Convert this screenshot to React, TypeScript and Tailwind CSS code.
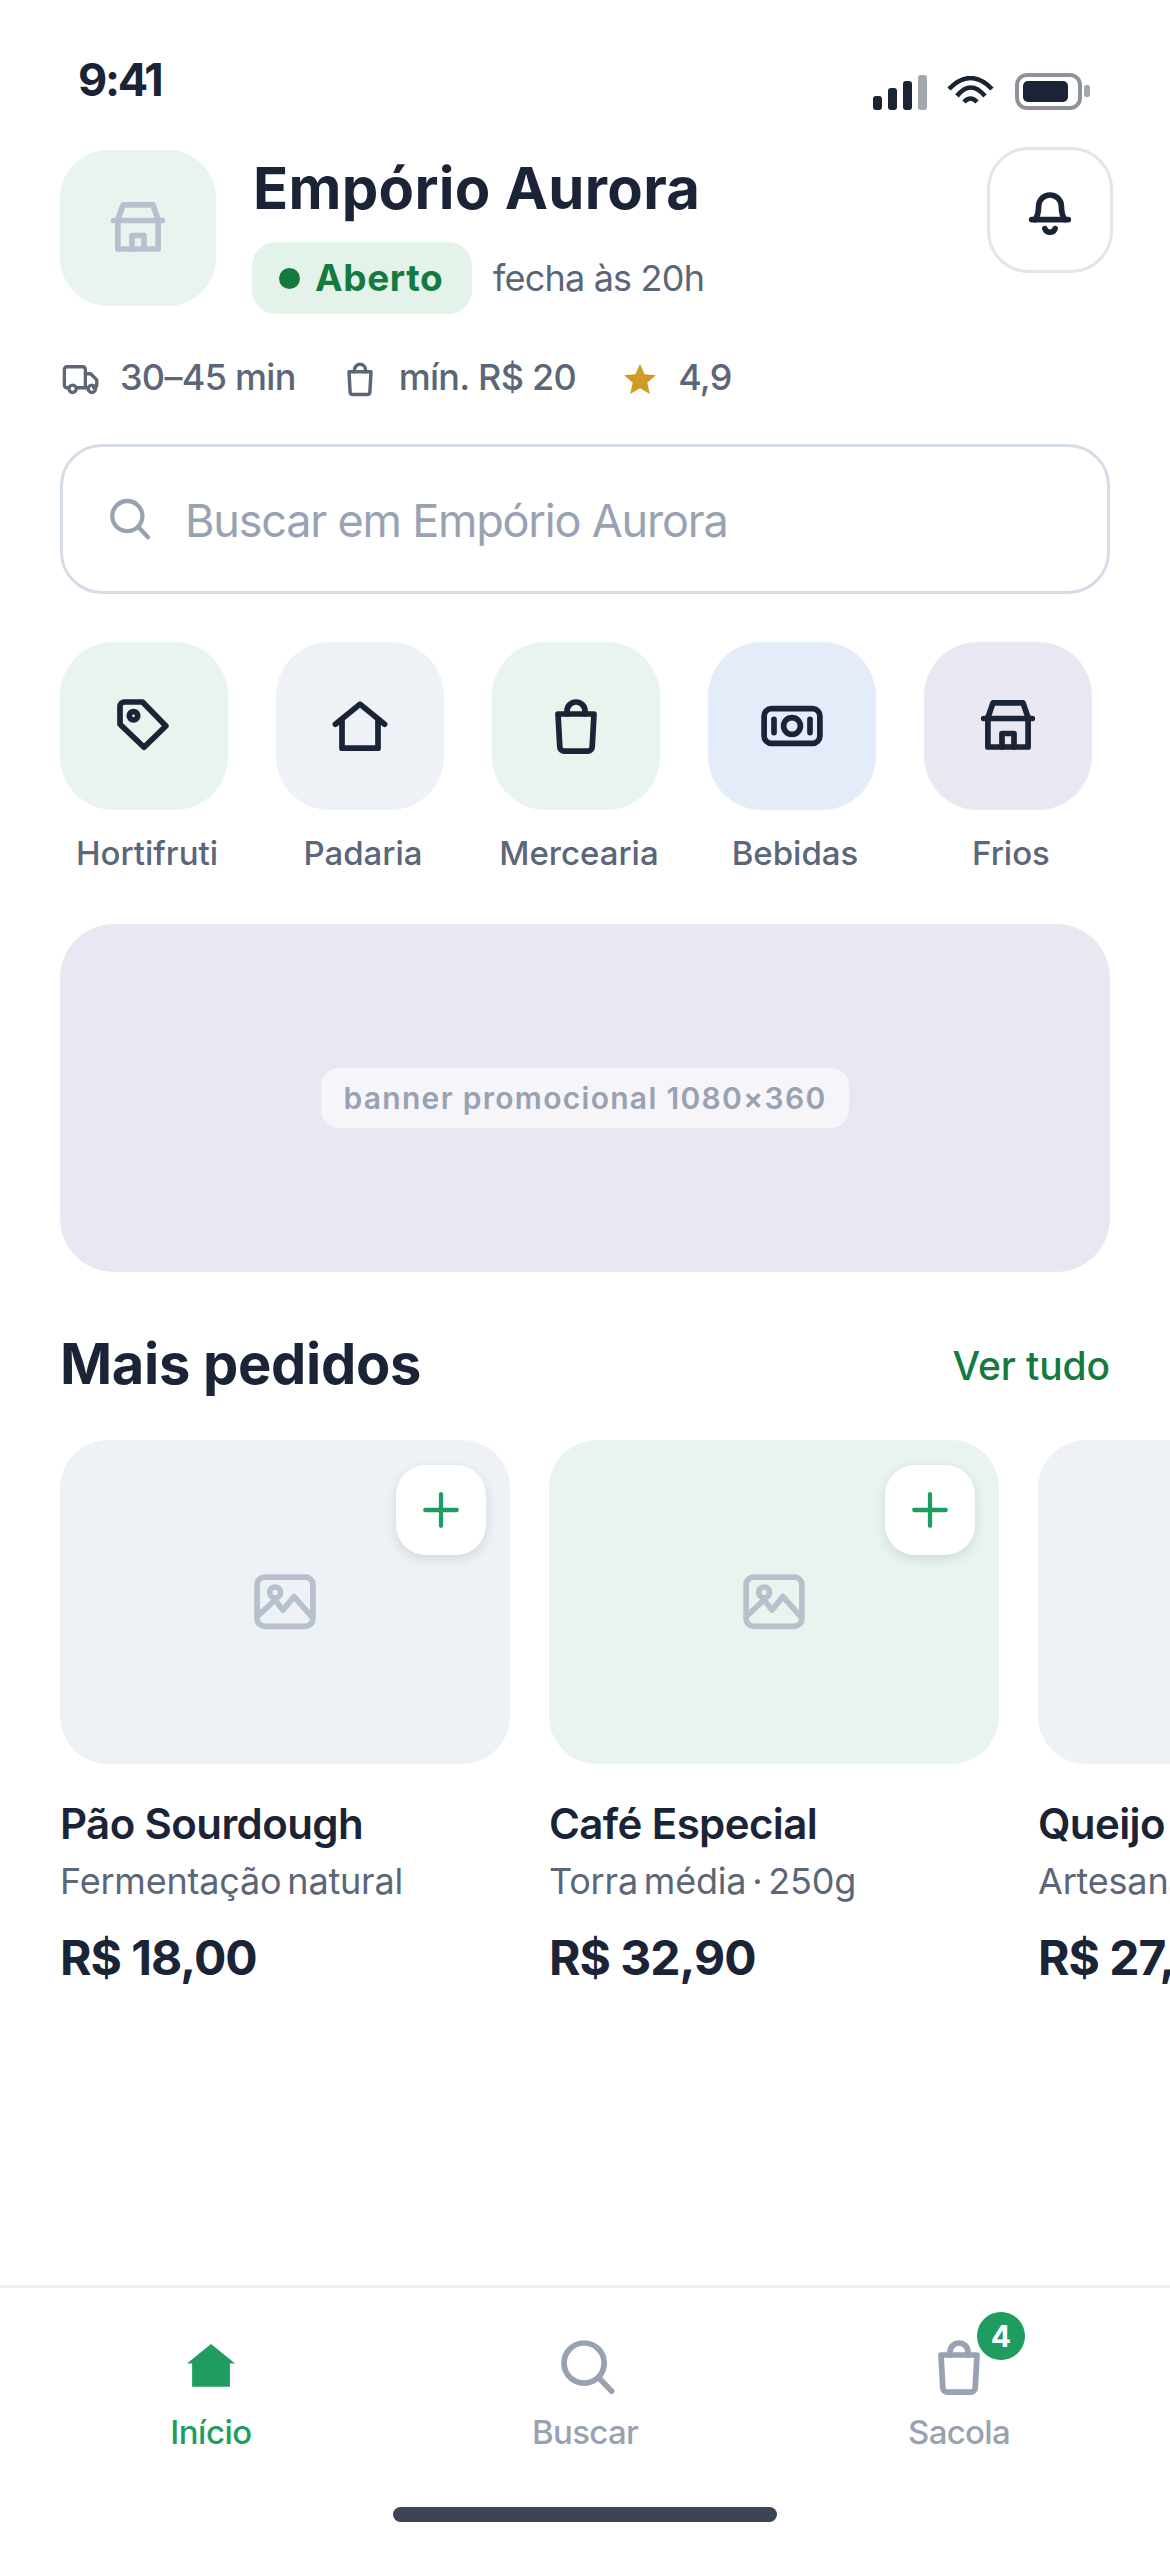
import type { ReactNode } from 'react';

const CATEGORIES = [
  { label: 'Hortifruti', bg: 'bg-[#e9f4ee]', icon: 'tag' },
  { label: 'Padaria', bg: 'bg-[#eef1f6]', icon: 'home' },
  { label: 'Mercearia', bg: 'bg-[#e9f4ee]', icon: 'bag' },
  { label: 'Bebidas', bg: 'bg-[#e4ebf9]', icon: 'money' },
  { label: 'Frios', bg: 'bg-[#e9e7f2]', icon: 'store' },
];

const PRODUCTS = [
  { name: 'Pão Sourdough', desc: 'Fermentação natural', price: 'R$ 18,00', bg: 'bg-[#eef1f6]' },
  { name: 'Café Especial', desc: 'Torra média · 250g', price: 'R$ 32,90', bg: 'bg-[#e9f4ee]' },
  { name: 'Queijo Minas', desc: 'Artesanal', price: 'R$ 27,50', bg: 'bg-[#eef1f6]' },
];

function Icon({ children, className }: { children: ReactNode; className: string }) {
  return (
    <svg
      viewBox="0 0 24 24"
      fill="none"
      stroke="currentColor"
      strokeWidth={1.9}
      strokeLinecap="round"
      strokeLinejoin="round"
      className={className}
    >
      {children}
    </svg>
  );
}

const PATHS: Record<string, ReactNode> = {
  tag: (
    <>
      <path d="M5.5 4h6L19.3 12 12 19.1 4 11.4V5.5A1.5 1.5 0 0 1 5.5 4z" />
      <circle cx="8.5" cy="8.6" r="1.4" />
    </>
  ),
  home: (
    <>
      <path d="M3.8 11.4 12 4.7l8.2 6.7" />
      <path d="M6 9.8v9.6h12V9.8" />
    </>
  ),
  bag: (
    <>
      <path d="M6 8h12l-.6 11a1.5 1.5 0 0 1-1.5 1.4H8.1A1.5 1.5 0 0 1 6.6 19z" />
      <path d="M9 8V7a3 3 0 0 1 6 0v1" />
    </>
  ),
  money: (
    <>
      <rect x="2.7" y="6.2" width="18.6" height="11.6" rx="2.5" />
      <circle cx="12" cy="12" r="2.8" />
      <path d="M6 9.8v4.4M18 9.8v4.4" />
    </>
  ),
  store: (
    <>
      <path d="M3.9 9.5h16.2" />
      <path d="M5.2 9.5 7 4.3h10l1.8 5.2" />
      <path d="M5.3 9.5V19h13.4V9.5" />
      <path d="M10 19v-4.5h4V19" />
    </>
  ),
  truck: (
    <>
      <path d="M5 17H4a1.5 1.5 0 0 1-1.5-1.5v-9A1.5 1.5 0 0 1 4 5h9a1.5 1.5 0 0 1 1.5 1.5V17H9.5" />
      <path d="M14.5 9h3l3.5 3.5V15.5a1.5 1.5 0 0 1-1.5 1.5h-.3" />
      <path d="M14.5 17h1.7" />
      <circle cx="7.2" cy="17.6" r="2.1" />
      <circle cx="18.2" cy="17.6" r="2.1" />
    </>
  ),
  search: (
    <>
      <circle cx="11.7" cy="10.7" r="6.7" />
      <path d="m16.6 15.6 4.3 4.5" />
    </>
  ),
  bell: (
    <>
      <path d="M5.9 15.2h12.2" />
      <path d="M7 15.2c.9-1.2 1.2-2.6 1.2-4.4a3.8 3.8 0 0 1 7.6 0c0 1.8.3 3.2 1.2 4.4" />
      <path d="M10.3 18.2a1.8 1.8 0 0 0 3.4 0" />
    </>
  ),
  image: (
    <>
      <rect x="2.7" y="3.7" width="18.6" height="16.4" rx="2.5" />
      <circle cx="8.7" cy="8.8" r="1.8" />
      <path d="m3.4 16.2 5.3-4.9 2.6 3.4 3.7-4.5 5.9 6.7" />
    </>
  ),
  plus: <path d="M12 5v14M5 12h14" />,
};

function StatusBar() {
  return (
    <div className="h-[147px] flex justify-between items-start pl-[78px] pr-[80px] pt-[57px]">
      <span className="text-[45px] leading-[46px] font-bold tracking-[-2.2px] text-[#1b2436]">9:41</span>
      <div className="flex items-start gap-[20px] pt-[16px]">
        <svg width="54" height="35" viewBox="0 0 54 35" className="mt-[2px]">
          <rect x="0" y="21" width="9" height="14" rx="3" fill="#1b2436" />
          <rect x="15" y="13" width="9" height="22" rx="3" fill="#1b2436" />
          <rect x="30" y="6" width="9" height="29" rx="3" fill="#1b2436" />
          <rect x="45" y="0" width="9" height="35" rx="3" fill="#a3a7af" />
        </svg>
        <svg width="48" height="28" viewBox="0 0 48 28" fill="none" stroke="#1b2436" strokeWidth="4.5" className="mt-[3px]">
          <path d="M2 13Q23.5-9 45 13" />
          <path d="M10 20Q23.5 3 38 20" />
          <path d="M17 26Q23.5 19 30 26" />
        </svg>
        <svg width="75" height="37" viewBox="0 0 75 37">
          <rect x="2" y="2" width="63" height="33" rx="10" fill="none" stroke="#8e929b" strokeWidth="4" />
          <rect x="8" y="8" width="45" height="21" rx="5" fill="#1b2436" />
          <rect x="69" y="12" width="6" height="12" rx="2.5" fill="#a3a7af" />
        </svg>
      </div>
    </div>
  );
}

function Header() {
  return (
    <div className="flex justify-between items-start pl-[60px] pr-[57px]">
      <div className="flex gap-[36px] mt-[3px]">
        <div className="w-[156px] h-[156px] rounded-[48px] bg-[#e9f4ee] flex items-center justify-center text-[#b6c1cd]">
          <Icon className="w-[72px] h-[72px]">{PATHS.store}</Icon>
        </div>
        <div className="pt-[5px]">
          <h1 className="ml-[1px] text-[58px] leading-[66px] font-bold tracking-[0.3px] text-[#1b2436]">Empório Aurora</h1>
          <div className="flex items-center gap-[21px] mt-[21px]">
            <div className="h-[72px] w-[220px] rounded-[24px] bg-[#e3f3e9] flex items-center gap-[15px] pl-[27px]">
              <span className="w-[21px] h-[21px] rounded-full bg-[#157a3f]" />
              <span className="text-[37px] font-bold text-[#157a3f] tracking-[0.6px]">Aberto</span>
            </div>
            <span className="text-[36px] text-[#5b6678] tracking-[-0.8px]">fecha às 20h</span>
          </div>
        </div>
      </div>
      <button className="w-[126px] h-[126px] rounded-[42px] border-[3px] border-[#e2e5ec] bg-white flex items-center justify-center text-[#1b2436]">
        <Icon className="w-[72px] h-[72px]">{PATHS.bell}</Icon>
      </button>
    </div>
  );
}

function MetaRow() {
  return (
    <div className="flex items-center gap-[43px] pl-[60px] mt-[44px] h-[42px] text-[36px] leading-[38px] font-medium text-[#5b6678] tracking-[-0.7px]">
      <div className="flex items-center gap-[18px]">
        <Icon className="w-[42px] h-[42px]">{PATHS.truck}</Icon>
        <span className="-mt-[4px]">30–45 min</span>
      </div>
      <div className="flex items-center gap-[18px]">
        <Icon className="w-[44px] h-[44px] -mx-[1px]">{PATHS.bag}</Icon>
        <span className="-mt-[4px]">mín. R$ 20</span>
      </div>
      <div className="flex items-center gap-[19px] ml-[2px]">
        <svg viewBox="0 0 24 24" className="w-[38px] h-[38px]" fill="#cf9a25">
          <polygon points="12,2.5 14.9,9 22,9.7 16.6,14.4 18.2,21.5 12,17.8 5.8,21.5 7.4,14.4 2,9.7 9.1,9" />
        </svg>
        <span className="-mt-[4px]">4,9</span>
      </div>
    </div>
  );
}

function SearchBar() {
  return (
    <div className="mx-[60px] mt-[44px] h-[150px] rounded-[42px] border-[3px] border-[#d5dce8] flex items-center pl-[38px] gap-[30px] text-[#98a2b3]">
      <Icon className="w-[54px] h-[54px]">{PATHS.search}</Icon>
      <span className="pt-[3px] text-[45px] tracking-[-1.2px]">Buscar em Empório Aurora</span>
    </div>
  );
}

function Categories() {
  return (
    <div className="flex gap-[42px] pl-[60px] mt-[48px]">
      {CATEGORIES.map((c) => (
        <div key={c.label} className="w-[174px]">
          <div className={`w-[168px] h-[168px] rounded-[54px] flex items-center justify-center text-[#1b2436] ${c.bg}`}>
            <Icon className="w-[72px] h-[72px]">{PATHS[c.icon]}</Icon>
          </div>
          <div className="mt-[22px] text-center text-[33px] leading-[42px] font-medium text-[#5b6678] tracking-[0px] whitespace-nowrap">
            {c.label}
          </div>
        </div>
      ))}
    </div>
  );
}

function Banner() {
  return (
    <div className="mx-[60px] mt-[50px] h-[348px] rounded-[54px] bg-[#e9e7f2] flex items-center justify-center">
      <div className="h-[60px] w-[528px] rounded-[18px] bg-white/60 flex items-center justify-center text-[30px] font-semibold text-[#98a2b3] tracking-[1.3px] whitespace-nowrap">
        banner promocional 1080×360
      </div>
    </div>
  );
}

function ProductCard({ name, desc, price, bg }: (typeof PRODUCTS)[number]) {
  return (
    <div className="w-[450px] shrink-0">
      <div className={`relative h-[324px] rounded-[48px] flex items-center justify-center text-[#b6c1cd] ${bg}`}>
        <Icon className="w-[72px] h-[72px]">{PATHS.image}</Icon>
        <div className="absolute top-[25px] right-[24px] w-[90px] h-[90px] rounded-[30px] bg-white shadow-[0_4px_12px_rgba(27,36,54,0.12)] flex items-center justify-center text-[#1f9d61]">
          <Icon className="w-[54px] h-[54px]">{PATHS.plus}</Icon>
        </div>
      </div>
      <div className="mt-[35px] text-[42px] leading-[50px] font-semibold text-[#1b2436] tracking-[-0.6px] whitespace-nowrap">{name}</div>
      <div className="mt-[11px] text-[36px] leading-[42px] text-[#5b6678] tracking-[-0.2px] [word-spacing:-4px] whitespace-nowrap">{desc}</div>
      <div className="mt-[29px] text-[48px] leading-[54px] font-bold text-[#1b2436] tracking-[-1px] whitespace-nowrap">{price}</div>
    </div>
  );
}

function BottomNav() {
  return (
    <div className="mt-auto border-t-[3px] border-[#edf0f4]">
      <div className="flex px-[24px] pt-[43px]">
        <div className="w-[374px] flex flex-col items-center text-[#1f9d61]">
          <svg viewBox="0 0 24 24" className="w-[72px] h-[72px]" fill="currentColor">
            <path d="M12 4.3 20 10.8H18.3V18.6H5.7V10.8H4z" />
          </svg>
          <span className="mt-[8px] text-[33px] leading-[42px] font-medium tracking-[-0.5px]">Início</span>
        </div>
        <div className="w-[374px] flex flex-col items-center text-[#98a2b3]">
          <Icon className="w-[72px] h-[72px]">{PATHS.search}</Icon>
          <span className="mt-[8px] text-[33px] leading-[42px] font-medium tracking-[-0.7px]">Buscar</span>
        </div>
        <div className="w-[374px] flex flex-col items-center text-[#98a2b3]">
          <div className="relative">
            <Icon className="w-[72px] h-[72px]">{PATHS.bag}</Icon>
            <span className="absolute -top-[19px] left-[54px] w-[48px] h-[48px] rounded-full bg-[#1f9d61] text-white text-[30px] font-bold flex items-center justify-center">
              4
            </span>
          </div>
          <span className="mt-[8px] text-[33px] leading-[42px] font-medium tracking-[-0.7px]">Sacola</span>
        </div>
      </div>
      <div className="mx-auto mt-[54px] mb-[28px] w-[384px] h-[15px] rounded-full bg-[#3d4453]" />
    </div>
  );
}

export default function App() {
  return (
    <div className="w-[1170px] h-[2550px] bg-white flex flex-col overflow-hidden font-['Inter','Liberation_Sans',sans-serif]">
      <StatusBar />
      <Header />
      <MetaRow />
      <SearchBar />
      <Categories />
      <Banner />

      {/* Mais pedidos */}
      <div className="flex justify-between items-center px-[60px] mt-[59px] h-[66px]">
        <h2 className="text-[56px] font-bold text-[#1b2436] tracking-[-0.3px]">Mais pedidos</h2>
        <span className="mt-[4px] text-[39px] font-medium text-[#157a3f] tracking-[-0.1px]">Ver tudo</span>
      </div>
      <div className="flex gap-[39px] pl-[60px] pb-[10px] mt-[43px] overflow-hidden">
        {PRODUCTS.map((p) => (
          <ProductCard key={p.name} {...p} />
        ))}
      </div>

      <BottomNav />
    </div>
  );
}
